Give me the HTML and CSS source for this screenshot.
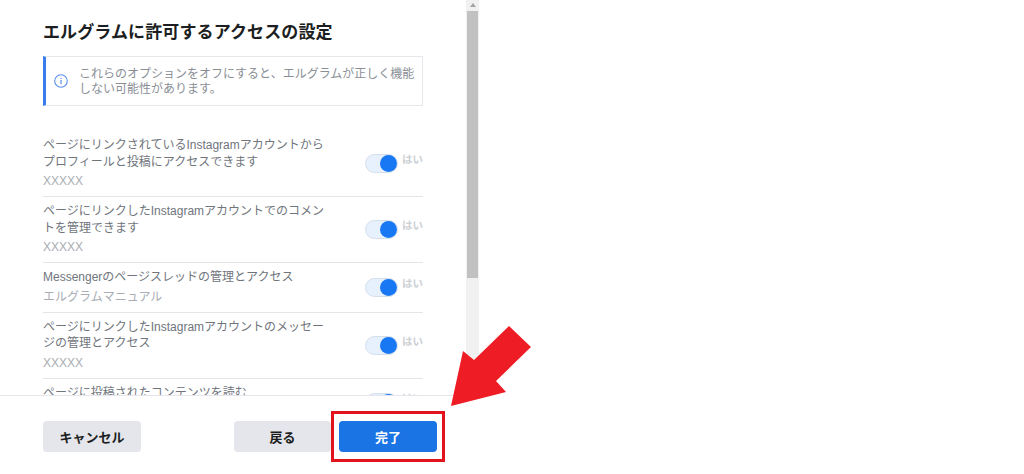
FILE: index.html
```html
<!DOCTYPE html>
<html lang="ja">
<head>
  <meta charset="UTF-8" />
  <title>エルグラムに許可するアクセスの設定</title>
  <link rel="stylesheet" href="styles.css">
</head>
<body>
  <div class="dialog">
    <div class="dialog-main">
      <div class="dialog-body">
        <h1 class="dialog-title">エルグラムに許可するアクセスの設定</h1>

        <!-- 注意書き -->
        <div class="notice">
          <svg class="notice-icon" width="14" height="14" viewBox="0 0 14 14" fill="none">
            <circle cx="7" cy="7" r="6.3" stroke="#5b8def" stroke-width="1.1"/>
            <rect x="6.4" y="6" width="1.2" height="4.2" fill="#5b8def"/>
            <rect x="6.4" y="3.8" width="1.2" height="1.2" fill="#5b8def"/>
          </svg>
          <p class="notice-text">これらのオプションをオフにすると、エルグラムが正しく機能しない可能性があります。</p>
        </div>

        <!-- 権限一覧 -->
        <div class="perm-list">
          <div class="perm-row">
            <div class="perm-info">
              <div class="perm-name">ページにリンクされているInstagramアカウントからプロフィールと投稿にアクセスできます</div>
              <div class="perm-target">XXXXX</div>
            </div>
            <div class="perm-switch"><span class="toggle"></span><span class="toggle-label">はい</span></div>
          </div>
          <div class="perm-row">
            <div class="perm-info">
              <div class="perm-name">ページにリンクしたInstagramアカウントでのコメントを管理できます</div>
              <div class="perm-target">XXXXX</div>
            </div>
            <div class="perm-switch"><span class="toggle"></span><span class="toggle-label">はい</span></div>
          </div>
          <div class="perm-row">
            <div class="perm-info">
              <div class="perm-name">Messengerのページスレッドの管理とアクセス</div>
              <div class="perm-target">エルグラムマニュアル</div>
            </div>
            <div class="perm-switch"><span class="toggle"></span><span class="toggle-label">はい</span></div>
          </div>
          <div class="perm-row">
            <div class="perm-info">
              <div class="perm-name">ページにリンクしたInstagramアカウントのメッセージの管理とアクセス</div>
              <div class="perm-target">XXXXX</div>
            </div>
            <div class="perm-switch"><span class="toggle"></span><span class="toggle-label">はい</span></div>
          </div>
          <div class="perm-row">
            <div class="perm-info">
              <div class="perm-name">ページに投稿されたコンテンツを読む</div>
              <div class="perm-target">エルグラムマニュアル</div>
            </div>
            <div class="perm-switch"><span class="toggle"></span><span class="toggle-label">はい</span></div>
          </div>
        </div>
      </div>

      <!-- スクロールバー -->
      <div class="scrollbar">
        <div class="scrollbar-arrow"></div>
        <div class="scrollbar-thumb"></div>
      </div>
    </div>

    <div class="dialog-footer">
      <button class="btn">キャンセル</button>
      <div class="footer-right">
        <button class="btn btn-back">戻る</button>
        <button class="btn btn-primary">完了</button>
      </div>
    </div>
  </div>

  <!-- 赤枠と矢印 -->
  <div class="mark-box"></div>
  <svg class="mark-arrow" width="90" height="90" viewBox="0 0 90 90">
    <polygon points="6,85 18,30 29,39 64,5 86,26 51,60 61,71" fill="#ee1c25"/>
  </svg>
</body>
</html>
```

FILE: styles.css
```css
body {
  margin: 0;
  height: 474px;
  overflow: hidden;
  background: #fff;
  font-family: "Liberation Sans", "Noto Sans CJK JP", sans-serif;
  color: #606770;
}

.dialog {
  width: 480px;
  height: 474px;
  display: flex;
  flex-direction: column;
}

.dialog-main {
  height: 395px;
  display: flex;
  overflow: hidden;
}

.dialog-body {
  width: 380px;
  padding: 0 43px;
}

.dialog-title {
  margin: 21px 0 0;
  font-size: 17px;
  line-height: 24px;
  font-weight: 700;
  letter-spacing: 0.12px;
  color: #1c1e21;
}

/* 注意書き */
.notice {
  margin-top: 11px;
  height: 50px;
  box-sizing: border-box;
  display: flex;
  align-items: center;
  gap: 11px;
  padding: 0 3px 0 8px;
  border: 1px solid #e6e7ea;
  border-left: 3px solid #3b7ded;
}

.notice-icon {
  flex: none;
}

.notice-text {
  margin: 2px 0 0;
  font-size: 12px;
  line-height: 15px;
  color: #8a8f96;
}

/* 権限一覧 */
.perm-list {
  margin-top: 25px;
}

.perm-row {
  display: flex;
  justify-content: space-between;
  align-items: center;
  padding: 6px 0;
  border-bottom: 1px solid #e4e5e7;
}

.perm-info {
  width: 284px;
}

.perm-name {
  font-size: 12px;
  line-height: 16.5px;
  color: #70757c;
}

.perm-target {
  margin-top: 3px;
  font-size: 12px;
  line-height: 17px;
  color: #a9adb3;
}

.perm-switch {
  display: flex;
  align-items: flex-start;
  gap: 4px;
}

.toggle {
  position: relative;
  display: block;
  width: 33px;
  height: 19px;
  box-sizing: border-box;
  border: 1px solid #d5dfec;
  border-radius: 10px;
  background: #e7f0fd;
}

.toggle::after {
  content: "";
  position: absolute;
  top: 0;
  right: 0;
  width: 17px;
  height: 17px;
  border-radius: 50%;
  background: #1877f2;
}

.toggle-label {
  font-size: 10.5px;
  line-height: 11px;
  font-weight: 700;
  color: #ccd0d5;
}

/* スクロールバー */
.scrollbar {
  width: 13px;
  background: #f1f1f1;
  display: flex;
  flex-direction: column;
  align-items: center;
}

.scrollbar-arrow {
  margin-top: 3px;
  width: 0;
  height: 0;
  border-left: 3px solid transparent;
  border-right: 3px solid transparent;
  border-bottom: 4px solid #a3a3a3;
}

.scrollbar-thumb {
  margin-top: 4px;
  width: 11px;
  height: 267px;
  background: #c1c1c1;
}

/* フッター */
.dialog-footer {
  flex: 1;
  display: flex;
  justify-content: space-between;
  align-items: flex-start;
  padding: 25px 43px 0;
  border-top: 1px solid #e4e6eb;
}

.footer-right {
  display: flex;
  gap: 8px;
}

.btn {
  width: 98px;
  height: 31px;
  padding: 0;
  border: none;
  border-radius: 4px;
  background: #e4e6eb;
  font-family: inherit;
  font-size: 13px;
  font-weight: 700;
  color: #1c1e21;
}

.btn-back {
  width: 97px;
}

.btn-primary {
  background: #1b74e4;
  color: #fff;
}

/* 赤枠と矢印 */
.mark-box {
  position: absolute;
  left: 331px;
  top: 411px;
  width: 114px;
  height: 51px;
  box-sizing: border-box;
  border: 3px solid #e1141e;
}

.mark-arrow {
  position: absolute;
  left: 445px;
  top: 321px;
}
```
